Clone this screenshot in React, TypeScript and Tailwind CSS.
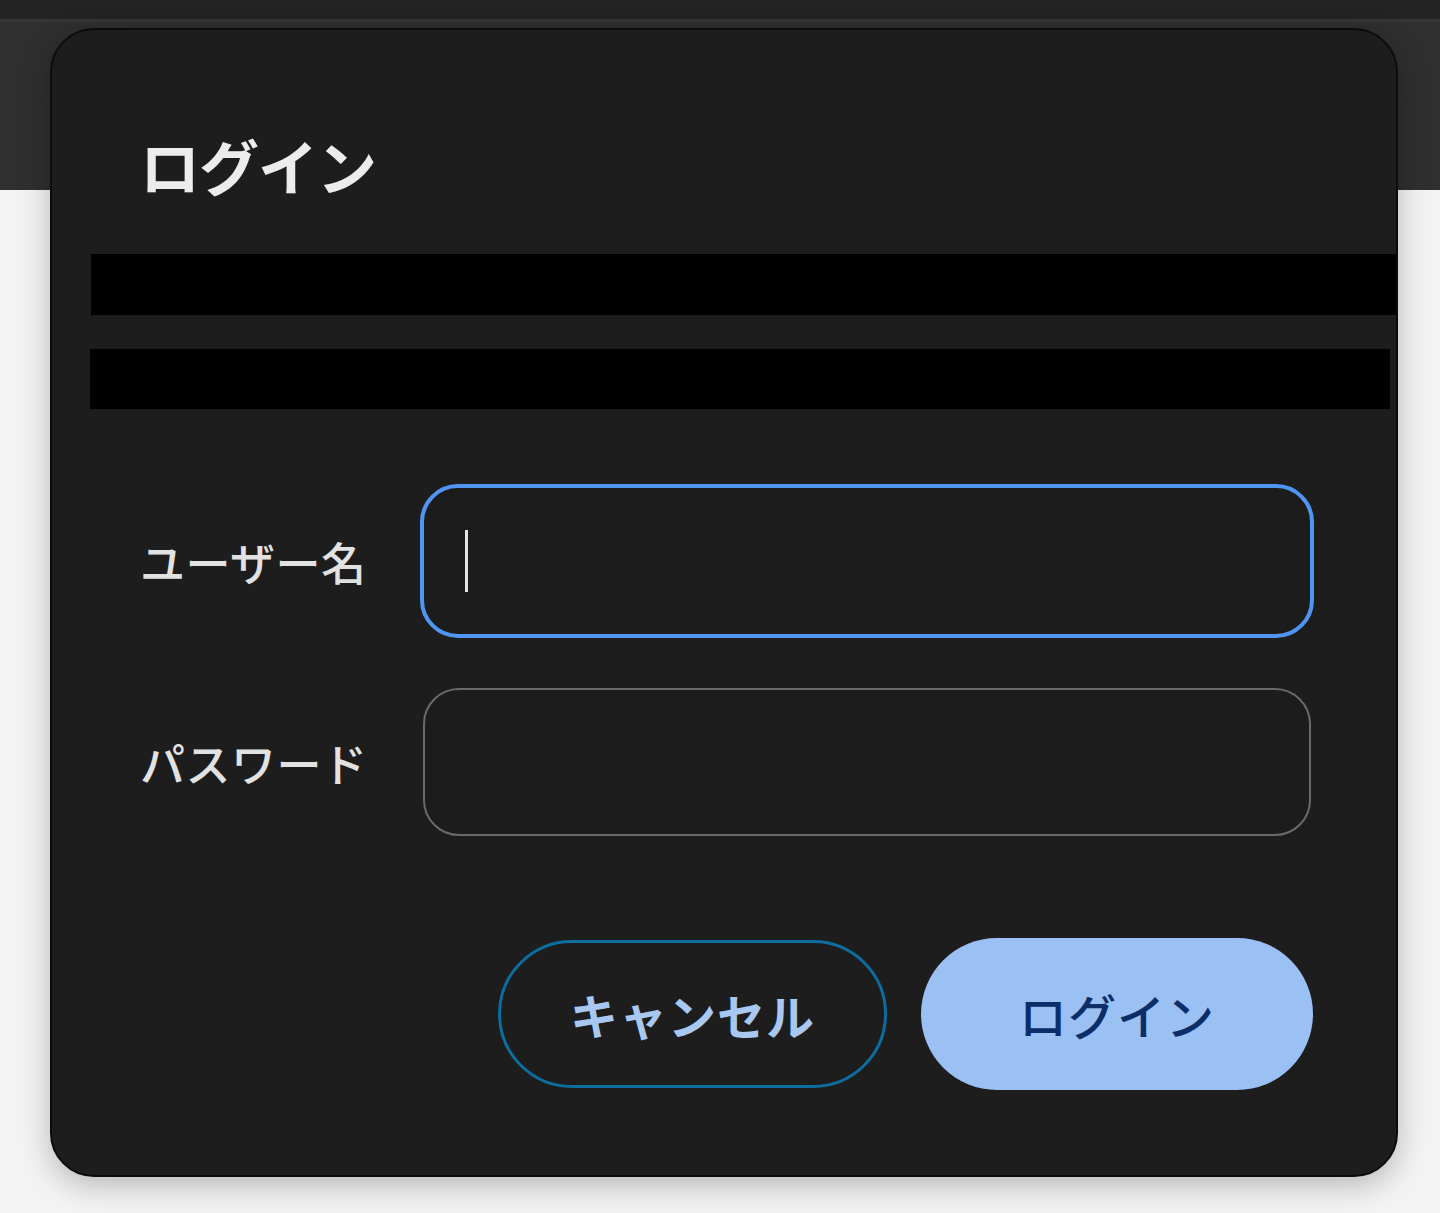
import React from "react";

export default function App() {
  const font = { fontFamily: '"Noto Sans CJK JP", "Noto Sans", sans-serif' };
  return (
    <div className="relative w-[1440px] h-[1213px] overflow-hidden bg-[#f3f3f3]" style={font}>
      {/* background app header */}
      <div className="flex flex-col h-[190px]">
        <div className="h-[19px] bg-[#232323]" />
        <div className="h-[3px] bg-[#363636]" />
        <div className="flex-1 bg-[#2f2f2f]" />
      </div>

      {/* dialog */}
      <div className="absolute left-[50px] top-[28px] w-[1348px] h-[1149px] rounded-[44px] bg-[#1d1d1d] border-2 border-[#0c0c0c] shadow-[0_8px_30px_rgba(0,0,0,0.25)] flex flex-col">
        <h2 className="ml-[88px] mt-[105px] text-[60px] leading-none font-bold text-[#ececec] tracking-[-1px]">
          ログイン
        </h2>

        <div className="mt-[59px] ml-[39px] h-[61px] bg-black" />
        <div className="mt-[34px] ml-[38px] mr-[6px] h-[60px] bg-black" />

        <div className="mt-[75px] flex flex-col gap-[50px] pl-[88px]">
          <div className="flex items-center">
            <span className="w-[280px] text-[45px] leading-none font-medium text-[#e2e2e2] tracking-[0.5px]">ユーザー名</span>
            <div className="w-[894px] h-[154px] rounded-[38px] border-4 border-[#4f95f2] bg-[#1c1c1c] flex items-center pl-[41px]">
              <div className="w-[3px] h-[62px] bg-[#e6e6e6]" />
            </div>
          </div>
          <div className="flex items-center">
            <span className="w-[283px] text-[45px] leading-none font-medium text-[#e2e2e2] tracking-[0.5px]">パスワード</span>
            <div className="w-[888px] h-[148px] rounded-[36px] border-2 border-[#6a6a6a] bg-[#1c1c1c]" />
          </div>
        </div>

        <div className="mt-[102px] flex justify-end items-center gap-[34px] pr-[83px]">
          <button className="w-[389px] h-[148px] rounded-full border-[3px] border-[#0c6d9f] text-[48px] font-bold text-[#a8c7f1] leading-none tracking-[1px]">
            キャンセル
          </button>
          <button className="w-[392px] h-[152px] rounded-full bg-[#9bc0f4] text-[48px] font-medium text-[#0b2e69] leading-none tracking-[1px]">
            ログイン
          </button>
        </div>
      </div>
    </div>
  );
}
